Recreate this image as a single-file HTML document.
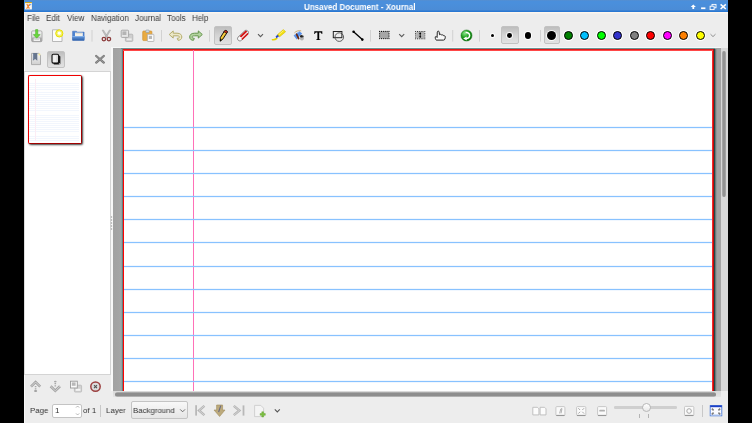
<!DOCTYPE html>
<html><head><meta charset="utf-8">
<style>
*{margin:0;padding:0;box-sizing:border-box}
body{-webkit-font-smoothing:antialiased}
html,body{width:752px;height:423px;overflow:hidden;background:#000;font-family:"Liberation Sans",sans-serif;font-size:8px;color:#2e3436;position:relative}
.a{position:absolute}
.tx{position:absolute;line-height:10px;white-space:nowrap;font-size:8.5px;transform:scaleX(0.94);transform-origin:0 0;will-change:transform}
#win{left:24px;top:0;width:704px;height:423px;background:#ededed}
#title{left:24px;top:0;width:704px;height:12px;background:linear-gradient(#5a8ecb 0,#4a8fdc 1px,#4a8fdc 3px,#4b8cd6 10px,#2a78d2 11px,#2a78d2 12px)}
.m{top:13px;color:#3a3a3a}
.pressed{background:linear-gradient(#bdbdbd,#d4d4d4 50%,#e2e2e2);border:1px solid #c2c2c2;border-radius:2px}
#canvas{left:113px;top:48px;width:608px;height:343px;background:linear-gradient(90deg,#a2a2a2 0,#a4a4a4 5px,#a6a6a6 7px,#98aaaa 8px,#8aa0a0 9px,#6a7c7c 9px,#6a7c7c 10px,#a4a4a4 10px);overflow:hidden}
#page{left:123px;top:49px;width:590px;height:342px;background:#fff;border-left:1px solid #f00;border-top:2px solid #e01818;border-right:1px solid #f42a2a;overflow:hidden}
.rl{left:124px;width:588px;height:1px;background:#88c2ff;box-shadow:0 -1px 0 rgba(136,194,255,0.13),0 1px 0 rgba(136,194,255,0.13)}
.s{top:405.5px;color:#333;font-size:8px!important;transform:scaleX(0.98)!important}
.cc{border-radius:50%;border:1.3px solid #000;box-shadow:0 0 0 1px rgba(255,255,255,0.9)}
.dot{border-radius:50%;background:#000;box-shadow:0 0 0 1px rgba(255,255,255,0.85)}
</style></head><body>
<div id="win" class="a"></div>
<div class="a" style="left:24px;top:12px;width:1px;height:411px;background:#f8f8f8"></div>
<div id="title" class="a"></div>
<div class="tx" style="left:304px;top:2px;font-weight:bold;color:#fff">Unsaved Document - Xournal</div>
<div class="a" style="left:24px;top:12px;width:704px;height:1px;background:#fdf6ee"></div>
<div class="a" style="left:24px;top:13px;width:704px;height:1px;background:#f3f1ee"></div>
<div class="tx m" style="left:27px">File</div>
<div class="tx m" style="left:46px">Edit</div>
<div class="tx m" style="left:67px">View</div>
<div class="tx m" style="left:91px">Navigation</div>
<div class="tx m" style="left:135px">Journal</div>
<div class="tx m" style="left:167px">Tools</div>
<div class="tx m" style="left:192px">Help</div>

<!-- toolbar pressed buttons & dots -->
<div class="a pressed" style="left:214px;top:26px;width:18px;height:19px"></div>
<div class="a dot" style="left:490.5px;top:34px;width:3px;height:3px"></div>
<div class="a pressed" style="left:501px;top:26px;width:18px;height:18px"></div>
<div class="a dot" style="left:507.3px;top:33.2px;width:4.8px;height:4.8px"></div>
<div class="a dot" style="left:524.7px;top:32.3px;width:6.6px;height:6.6px"></div>
<div class="a pressed" style="left:544px;top:26px;width:16px;height:18px"></div>
<div class="a dot" style="left:547.4px;top:31.1px;width:9px;height:9px"></div>

<div class="a cc" style="left:564.0px;top:31px;width:9.2px;height:9.2px;background:#008000"></div>
<div class="a cc" style="left:580.2px;top:31px;width:9.2px;height:9.2px;background:#00c0ff"></div>
<div class="a cc" style="left:596.7px;top:31px;width:9.2px;height:9.2px;background:#00ff00"></div>
<div class="a cc" style="left:613.2px;top:31px;width:9.2px;height:9.2px;background:#3333cc"></div>
<div class="a cc" style="left:629.7px;top:31px;width:9.2px;height:9.2px;background:#808080"></div>
<div class="a cc" style="left:646.2px;top:31px;width:9.2px;height:9.2px;background:#ff0000"></div>
<div class="a cc" style="left:662.7px;top:31px;width:9.2px;height:9.2px;background:#ff00ff"></div>
<div class="a cc" style="left:679.2px;top:31px;width:9.2px;height:9.2px;background:#ff8000"></div>
<div class="a cc" style="left:695.7px;top:31px;width:9.2px;height:9.2px;background:#ffff00"></div>

<!-- sidebar -->
<div class="a pressed" style="left:47px;top:51px;width:18px;height:17px"></div>
<div class="a" style="left:24px;top:71px;width:87px;height:304px;background:#fff;border:1px solid #d4d4d4;border-left-color:#dcdcdc"></div>
<div class="a" style="left:28px;top:75px;width:54px;height:68.5px;background:#fff;border:1.5px solid #f00000;border-right-color:#a00000;border-bottom-color:#a00000;border-radius:2px;box-shadow:1px 1px 2px rgba(0,0,0,0.75)"><div class="a" style="left:0;top:6px;width:50px;height:59px;background:repeating-linear-gradient(#fff 0,#fff 1.1px,#f2f6fd 1.1px,#f2f6fd 2.1px)"></div></div>
<div class="a" style="left:35px;top:79px;width:1px;height:62px;background:#fcecf4"></div>

<!-- canvas -->
<div id="canvas" class="a"></div>
<div id="page" class="a"></div>
<div class="a" style="left:121px;top:48px;width:594px;height:1px;background:#6e9292"></div>
<div class="a" style="left:123px;top:50px;width:591px;height:1px;background:#ff4848"></div>
<div class="a" style="left:112px;top:47px;width:609px;height:1px;background:#f6f8f8"></div>
<div class="a" style="left:111px;top:47px;width:2px;height:344px;background:#f8f8f8"></div>
<div class="a" style="left:713px;top:49px;width:1px;height:342px;background:#c00808"></div>
<div class="a" style="left:714px;top:49px;width:1px;height:342px;background:#204a4a"></div>
<div class="a" style="left:715px;top:49px;width:1px;height:342px;background:#6c7878"></div>
<div class="a" style="left:716px;top:49px;width:1px;height:342px;background:#949898"></div>
<div class="a" style="left:193px;top:50px;width:1px;height:341px;background:#ff70b8"></div>
<div class="a rl" style="top:126.9px"></div><div class="a rl" style="top:150.0px"></div><div class="a rl" style="top:173.1px"></div><div class="a rl" style="top:196.2px"></div><div class="a rl" style="top:219.3px"></div><div class="a rl" style="top:242.4px"></div><div class="a rl" style="top:265.5px"></div><div class="a rl" style="top:288.6px"></div><div class="a rl" style="top:311.7px"></div><div class="a rl" style="top:334.8px"></div><div class="a rl" style="top:357.9px"></div><div class="a rl" style="top:381.0px"></div>
<div class="a" style="left:721px;top:48px;width:7px;height:343px;background:#d8d8d8"></div>
<div class="a" style="left:722.3px;top:50.6px;width:4.2px;height:146px;background:linear-gradient(90deg,#b0b0b0,#939393 30%,#939393 70%,#b0b0b0);border-radius:2.1px"></div>
<div class="a" style="left:113px;top:391px;width:608px;height:6px;background:linear-gradient(#dadada 0,#dadada 1px,#e4e4e4 6px)"></div>
<div class="a" style="left:115px;top:392px;width:601px;height:5px;background:linear-gradient(#bdbdbd 0,#8e8e8e 1.2px,#8e8e8e 3.6px,#c4c4c4 5px);border-radius:2.5px"></div>

<!-- status -->
<div class="tx s" style="left:29.5px">Page</div>
<div class="a" style="left:52px;top:404px;width:29.5px;height:13.5px;background:#fff;border:1px solid #c4c4c4;border-radius:2px"></div>
<div class="tx s" style="left:54.5px">1</div>
<div class="tx s" style="left:82.5px">of 1</div>
<div class="a" style="left:99.5px;top:405px;width:1px;height:12px;background:#c8c8c8"></div>
<div class="tx s" style="left:106px">Layer</div>
<div class="a" style="left:130.8px;top:401.3px;width:57.7px;height:18.2px;background:linear-gradient(#f8f8f8,#e6e6e6);border:1px solid #c4c4c4;border-radius:2px"></div>
<div class="tx s" style="left:133px">Background</div>
<div class="a" style="left:613.6px;top:406.2px;width:63.7px;height:2.6px;background:#cfcfcf;border-radius:1.3px"></div>
<div class="a" style="left:642.2px;top:403px;width:9px;height:9px;background:linear-gradient(#fff,#e8e8e8);border:1px solid #b8b8b8;border-radius:50%"></div>
<div class="a" style="left:639px;top:413.5px;width:1px;height:4.5px;background:#b4b4b4"></div>
<div class="a" style="left:647.5px;top:413.5px;width:1px;height:4.5px;background:#b4b4b4"></div>
<div class="a" style="left:702px;top:405px;width:1px;height:12px;background:#c8c8c8"></div>
<svg class="a" style="left:0;top:0" width="752" height="423" viewBox="0 0 752 423">
<defs>
<linearGradient id="gbox" x1="0" y1="0" x2="0" y2="1"><stop offset="0" stop-color="#f4f4f4"/><stop offset="0.6" stop-color="#d8d8d8"/><stop offset="1" stop-color="#9a9a9a"/></linearGradient>
<linearGradient id="gbm" x1="0" y1="0" x2="0" y2="1"><stop offset="0" stop-color="#f4f4f4"/><stop offset="1" stop-color="#d0d0d0"/></linearGradient>
<linearGradient id="gfold" x1="0" y1="0" x2="0" y2="1"><stop offset="0" stop-color="#6a9ee0"/><stop offset="1" stop-color="#2c5ea8"/></linearGradient>
<radialGradient id="gref" cx="0.35" cy="0.3" r="0.75"><stop offset="0" stop-color="#8ae88a"/><stop offset="0.5" stop-color="#20a020"/><stop offset="1" stop-color="#067006"/></radialGradient>
</defs>
<!-- app icon -->
<rect x="25" y="2.2" width="6.9" height="7.2" fill="#fbf6ee"/>
<rect x="25" y="2" width="6.9" height="1.1" fill="#c8a420"/>
<path d="M26.8 4 L29.4 8.6 M29.6 4 L26.6 8.8" stroke="#f4802a" stroke-width="1.15"/>
<path d="M29.2 6 L31.2 4" stroke="#4a8ae0" stroke-width="0.9"/>
<!-- title buttons -->
<path d="M693.3 4.6 L695.9 7 H694.2 V8.9 H692.4 V7 H690.7 Z" fill="#fff"/>
<rect x="701.1" y="7.4" width="4.3" height="1.7" fill="#fff"/>
<rect x="712" y="4.4" width="4" height="3.4" fill="none" stroke="#fff" stroke-width="0.9"/>
<rect x="710.1" y="6.2" width="4" height="3.4" fill="#4a8cd8" stroke="#fff" stroke-width="0.9"/>
<path d="M720.6 4.4 L725.8 9 M725.8 4.4 L720.6 9" stroke="#fff" stroke-width="1.5"/>
<!-- save -->
<rect x="31.6" y="30.9" width="10.4" height="10.8" rx="1.2" fill="url(#gbox)" stroke="#a0a0a0" stroke-width="0.8"/>
<rect x="31.9" y="37.6" width="9.8" height="3.8" rx="0.8" fill="#a8a8a8"/>
<rect x="33.6" y="38.4" width="6.4" height="2.6" fill="#f2f2f2"/>
<rect x="34.4" y="39.1" width="4.8" height="0.5" fill="#b8b8b8"/>
<path d="M35.6 29.6h2.2v5h2.3l-3.4 3.6-3.4-3.6h2.3z" fill="#6ad83c" stroke="#40a820" stroke-width="0.5"/>
<!-- new -->
<path d="M52.5 29.8h7l2.5 2.5v9.2h-9.5z" fill="#fbfbfb" stroke="#a8a8a8" stroke-width="0.8"/>
<circle cx="59.3" cy="33.4" r="3.6" fill="#f4f06a" stroke="#e8e000" stroke-width="1"/>
<circle cx="59.3" cy="33.2" r="1.6" fill="#fff"/>
<!-- open folder -->
<path d="M72.6 31.2h3.8l0.9 0.9h6.8v8.2h-11.5z" fill="#4f84d0" stroke="#3a6ab8" stroke-width="0.5"/>
<rect x="75" y="32.6" width="7.8" height="4" fill="#f4f2ea"/>
<rect x="75.6" y="33.4" width="6.6" height="0.6" fill="#d8d4c8"/>
<path d="M72 36.2h12.8l-0.6 4.2h-11.6z" fill="url(#gfold)"/>
<path d="M72.2 36.5h12.4" stroke="#8ab4ec" stroke-width="0.7"/>
<!-- separators -->
<rect x="91.5" y="30" width="1" height="11.6" fill="#d2d2d2"/>
<rect x="161" y="30" width="1" height="11.6" fill="#d2d2d2"/>
<rect x="209" y="30" width="1" height="11.6" fill="#d2d2d2"/>
<rect x="370" y="30" width="1" height="11.6" fill="#d2d2d2"/>
<rect x="452.2" y="30" width="1" height="11.6" fill="#d2d2d2"/>
<rect x="479" y="30" width="1" height="11.6" fill="#d2d2d2"/>
<rect x="540" y="30" width="1" height="11.6" fill="#d2d2d2"/>
<!-- scissors -->
<path d="M102.2 30.2 L103.4 30 L107.4 36.4 L106.4 37.4 Z" fill="#c4c4c4" stroke="#9a9a9a" stroke-width="0.5"/>
<path d="M110.6 30.2 L109.4 30 L105.4 36.4 L106.4 37.4 Z" fill="#c4c4c4" stroke="#9a9a9a" stroke-width="0.5"/>
<circle cx="103.9" cy="39.1" r="1.75" fill="none" stroke="#8c3c3c" stroke-width="1.3"/>
<circle cx="108.9" cy="39.1" r="1.75" fill="none" stroke="#8c3c3c" stroke-width="1.3"/>
<!-- copy -->
<rect x="125.4" y="34.2" width="7.4" height="7.2" rx="0.9" fill="#cfcfcf" stroke="#b0b0b0" stroke-width="0.8"/>
<rect x="126.8" y="38.4" width="4.8" height="1.8" fill="#ededed"/>
<rect x="121.2" y="30.2" width="7.4" height="7.2" rx="0.9" fill="#e6e6e6" stroke="#a2a2a2" stroke-width="0.9"/>
<rect x="122.4" y="31.4" width="4" height="3.6" fill="#b4b4b4"/>
<!-- paste -->
<rect x="142.7" y="31" width="9.2" height="9.6" rx="0.9" fill="#e9ab42" stroke="#c98a2a" stroke-width="0.6"/>
<rect x="145.8" y="30" width="3.4" height="2.6" rx="0.9" fill="#d4dce4" stroke="#8a98a8" stroke-width="0.6"/>
<rect x="147.4" y="34.3" width="6.5" height="7.2" rx="0.6" fill="#fafafa" stroke="#a8a8a8" stroke-width="0.7"/>
<rect x="148.8" y="35.8" width="3.2" height="3.2" fill="#b8b8b8"/>
<!-- undo -->
<path d="M169.2 34.5 L173.2 30.9 V33.2 H177 C180.5 33.2 181.8 35 181.8 37 C181.8 39.2 180.2 40.3 178 40.3 L177.2 38.3 C178.6 38.3 179.4 37.8 179.4 37 C179.4 36.2 178.6 35.8 177 35.8 H173.2 V38.1 Z" fill="#ece8c8" stroke="#b4ac6c" stroke-width="1" stroke-linejoin="round"/>
<!-- redo -->
<path d="M202.3 34.5 L198.3 30.9 V33.2 H194.5 C191 33.2 189.7 35 189.7 37 C189.7 39.2 191.3 40.3 193.5 40.3 L194.3 38.3 C192.9 38.3 192.1 37.8 192.1 37 C192.1 36.2 192.9 35.8 194.5 35.8 H198.3 V38.1 Z" fill="#b4d4a0" stroke="#64944c" stroke-width="1" stroke-linejoin="round"/>
<!-- pencil -->
<path d="M220.2 41.2 L220.3 37.6 L224.5 30.9 C225.2 29.8 227.8 30.9 227.3 32.2 L223 38.9 Z" fill="#f0c028" stroke="#0a0a0a" stroke-width="0.95" stroke-linejoin="round"/>
<path d="M221.6 37.9 L225.9 31.1" stroke="#f8e070" stroke-width="0.6"/>
<path d="M224.5 30.9 C225.2 29.8 227.8 30.9 227.3 32.2 L226.6 33.2 L223.9 31.9 Z" fill="#d42a1a" stroke="#0a0a0a" stroke-width="0.6"/>
<path d="M220.2 41.2 L220.3 39 L221.9 39.8 Z" fill="#000"/>
<!-- eraser -->
<path d="M238 37.2 L244.8 30.8 C245.6 30 247 30.2 247.8 31 C248.6 31.8 248.8 33.2 248 34 L241.2 40.4 C240.4 41.2 239 41 238.2 40.2 C237.4 39.4 237.2 38 238 37.2Z" fill="#f8f8f8" stroke="#6a6a6a" stroke-width="0.8"/>
<path d="M239.6 36.2 L245.6 30.6 L247.4 31.6 L241.2 37.6 Z M241.4 38.8 L247.6 32.8 L248.4 34.2 L242.4 40 Z" fill="#d41a1a"/>
<!-- chevrons -->
<path d="M258 34.2 L260.5 36.6 L263 34.2" fill="none" stroke="#5c5c5c" stroke-width="1.15"/>
<path d="M399.2 34.2 L401.7 36.6 L404.2 34.2" fill="none" stroke="#5c5c5c" stroke-width="1.15"/>
<path d="M710.5 34.2 L713 36.6 L715.5 34.2" fill="none" stroke="#909090" stroke-width="1"/>
<!-- highlighter -->
<path d="M272.4 39.7 C274 39.9 275.6 39.5 276.8 38.4" fill="none" stroke="#e8d400" stroke-width="1.5" stroke-linecap="round"/>
<path d="M276.4 38.2 L275.6 36.4 L278 34.2 L279.8 35.8 Z" fill="#2848c8"/>
<path d="M277.6 34.6 L283.4 29.6 L285.6 31.8 L279.6 36.8 Z" fill="#f4e010" stroke="#d0bc00" stroke-width="0.6"/>
<path d="M279 34.6 L283.6 30.6" stroke="#fff6a0" stroke-width="0.7"/>
<!-- image tool -->
<path d="M294.4 32.9 C296 30.9 299 30.3 301.2 30.9" fill="none" stroke="#c8a466" stroke-width="0.9"/>
<path d="M293.6 35.4 L299.4 31.2 L302.2 33.6 L296.6 39.6 Z" fill="#5a92ea"/>
<path d="M294.8 35.2 L299.2 32" stroke="#8ab8ff" stroke-width="0.7"/>
<path d="M296.6 34.2 L298.6 38.6" stroke="#6a2a10" stroke-width="1.7" stroke-linecap="round"/>
<ellipse cx="301.9" cy="37.6" rx="2.1" ry="2.9" fill="#b4b4b4"/>
<ellipse cx="301.7" cy="36.3" rx="1.6" ry="1.3" fill="#141414"/>
<circle cx="302.2" cy="35.8" r="0.5" fill="#d0d0d0"/>
<!-- T -->
<path d="M314.3 31.3 H322.3 V34 H321.6 C321.4 32.7 321 32.4 319.5 32.4 H319.2 V38.8 C319.2 39.4 319.6 39.5 320.5 39.5 V40 H316.1 V39.5 C317 39.5 317.4 39.4 317.4 38.8 V32.4 H317.1 C315.6 32.4 315.2 32.7 315 34 H314.3 Z" fill="#000"/>
<!-- shape -->
<rect x="333.3" y="31.5" width="8.6" height="6.2" fill="none" stroke="#222" stroke-width="1"/>
<circle cx="339.3" cy="37.1" r="4.3" fill="none" stroke="#444" stroke-width="0.85"/>
<!-- line -->
<path d="M353.6 31.8 L362.3 39.6" stroke="#000" stroke-width="1.3"/>
<circle cx="353.6" cy="31.8" r="1.3" fill="#000"/>
<circle cx="362.3" cy="39.6" r="1.3" fill="#000"/>
<!-- rect select -->
<rect x="379.6" y="31.4" width="9.4" height="7.2" fill="#a6a6a6"/>
<circle cx="379.60" cy="31.4" r="0.55" fill="#000"/><circle cx="379.60" cy="38.6" r="0.55" fill="#000"/>
<circle cx="381.48" cy="31.4" r="0.55" fill="#000"/><circle cx="381.48" cy="38.6" r="0.55" fill="#000"/>
<circle cx="383.36" cy="31.4" r="0.55" fill="#000"/><circle cx="383.36" cy="38.6" r="0.55" fill="#000"/>
<circle cx="385.24" cy="31.4" r="0.55" fill="#000"/><circle cx="385.24" cy="38.6" r="0.55" fill="#000"/>
<circle cx="387.12" cy="31.4" r="0.55" fill="#000"/><circle cx="387.12" cy="38.6" r="0.55" fill="#000"/>
<circle cx="389.00" cy="31.4" r="0.55" fill="#000"/><circle cx="389.00" cy="38.6" r="0.55" fill="#000"/>
<circle cx="379.6" cy="33.20" r="0.55" fill="#000"/><circle cx="389.0" cy="33.20" r="0.55" fill="#000"/>
<circle cx="379.6" cy="35.00" r="0.55" fill="#000"/><circle cx="389.0" cy="35.00" r="0.55" fill="#000"/>
<circle cx="379.6" cy="36.80" r="0.55" fill="#000"/><circle cx="389.0" cy="36.80" r="0.55" fill="#000"/>
<rect x="416.20000000000005" y="31.9" width="8.0" height="6.4" fill="#b2b2b2"/>
<circle cx="415.60" cy="31.4" r="0.5" fill="#000"/><circle cx="415.60" cy="38.8" r="0.5" fill="#000"/>
<circle cx="417.44" cy="31.4" r="0.5" fill="#000"/><circle cx="417.44" cy="38.8" r="0.5" fill="#000"/>
<circle cx="419.28" cy="31.4" r="0.5" fill="#000"/><circle cx="419.28" cy="38.8" r="0.5" fill="#000"/>
<circle cx="421.12" cy="31.4" r="0.5" fill="#000"/><circle cx="421.12" cy="38.8" r="0.5" fill="#000"/>
<circle cx="422.96" cy="31.4" r="0.5" fill="#000"/><circle cx="422.96" cy="38.8" r="0.5" fill="#000"/>
<circle cx="424.80" cy="31.4" r="0.5" fill="#000"/><circle cx="424.80" cy="38.8" r="0.5" fill="#000"/>
<circle cx="415.6" cy="33.25" r="0.5" fill="#000"/><circle cx="424.8" cy="33.25" r="0.5" fill="#000"/><circle cx="415.6" cy="35.10" r="0.5" fill="#000"/><circle cx="424.8" cy="35.10" r="0.5" fill="#000"/><circle cx="415.6" cy="36.95" r="0.5" fill="#000"/><circle cx="424.8" cy="36.95" r="0.5" fill="#000"/><path d="M420.2 32.8 V37.4" stroke="#000" stroke-width="0.9"/><path d="M419.1 34 L420.2 32.2 L421.3 34 Z M419.1 36.2 L420.2 38 L421.3 36.2 Z" fill="#000"/>
<!-- hand -->
<path d="M436.2 40.1 C435.5 39.2 435.1 38.1 435.3 36.9 L436.3 36.5 L437.1 37.5 L437.3 32.1 C437.4 30.8 439.1 30.8 439.2 32.1 L439.5 34.7 C440.1 34 441.4 34.2 441.6 35.1 C442.2 34.6 443.5 34.9 443.6 35.7 C444.5 35.5 445.5 36.1 445.3 37.3 L444.9 39 C444.7 39.8 444.1 40.1 443.5 40.1 Z" fill="#f8f8f8" stroke="#1a1a1a" stroke-width="0.95" stroke-linejoin="round"/>
<!-- refresh -->
<circle cx="466.5" cy="35.5" r="5.5" fill="url(#gref)" stroke="#0a6a0a" stroke-width="0.5"/>
<path d="M465.6 32.6 C467.8 32.2 469.6 33.6 469.6 35.6 C469.6 37.6 467.8 38.8 466 38.5" fill="none" stroke="#fff" stroke-width="1.5"/>
<path d="M463.2 38.4 L466.6 36.4 L466.8 40.4 Z" fill="#fff"/>
<!-- grip -->
<circle cx="111.5" cy="217" r="0.75" fill="#a0a0a0"/>
<circle cx="111.5" cy="220" r="0.75" fill="#a0a0a0"/>
<circle cx="111.5" cy="223" r="0.75" fill="#a0a0a0"/>
<circle cx="111.5" cy="226" r="0.75" fill="#a0a0a0"/>
<circle cx="111.5" cy="229" r="0.75" fill="#a0a0a0"/>
<!-- sidebar bookmark -->
<path d="M31.5 53.4h7.2l1.8 1.8v9.4h-9z" fill="url(#gbm)" stroke="#a0a0a0" stroke-width="0.8"/>
<path d="M32.9 53h4.4v7.8l-2.2-1.7-2.2 1.7z" fill="#66768e"/>
<path d="M33.6 53.4v6" stroke="#8a9ab0" stroke-width="0.6"/>
<circle cx="39.4" cy="54.4" r="1" fill="#f0e890"/>
<!-- sidebar pages -->
<path d="M53.6 55.8 h5.6 a1.2 1.2 0 0 1 1.2 1.2 v6.6 a1 1 0 0 1 -1 1 h-5.6 z" fill="#1a1a1a"/>
<rect x="52" y="54.3" width="6.6" height="8.8" rx="1.3" fill="#dcdcdc" stroke="#111" stroke-width="1.1"/>
<rect x="53.2" y="55.4" width="3" height="6.6" fill="#efefef"/>
<circle cx="59.4" cy="63.8" r="0.6" fill="#fff"/>
<!-- sidebar close -->
<path d="M96.2 56 L103.8 62.6 M103.8 56 L96.2 62.6" stroke="#777" stroke-width="2.3" stroke-linecap="round"/>
<path d="M96.2 56 L103.8 62.6 M103.8 56 L96.2 62.6" stroke="#9a9a9a" stroke-width="0.9" stroke-linecap="round"/>
<!-- sidebar bottom: up -->
<path d="M31 386.6 L35.6 382 L40.2 386.6" fill="none" stroke="#a4a4a4" stroke-width="2.6"/>
<path d="M31 386.6 L35.6 382 L40.2 386.6" fill="none" stroke="#dedede" stroke-width="0.8"/>
<path d="M35.6 386 V389.6" stroke="#a8a8a8" stroke-width="1.6" stroke-dasharray="1.2 1"/>
<ellipse cx="35.6" cy="391" rx="1.6" ry="0.9" fill="#a0a0a0"/>
<!-- down -->
<path d="M50.6 386.2 L55.3 390.8 L60 386.2" fill="none" stroke="#a4a4a4" stroke-width="2.6"/>
<path d="M50.6 386.2 L55.3 390.8 L60 386.2" fill="none" stroke="#dedede" stroke-width="0.8"/>
<path d="M55.3 383 V387" stroke="#a8a8a8" stroke-width="1.6" stroke-dasharray="1.2 1"/>
<ellipse cx="55.3" cy="381.6" rx="1.3" ry="0.9" fill="#a8a8a8"/>
<!-- copy page -->
<rect x="74.4" y="385.2" width="7.2" height="6.8" rx="0.8" fill="#d2d2d2" stroke="#b8b8b8" stroke-width="0.8"/>
<rect x="75.8" y="388.8" width="4.6" height="2" fill="#f6f6f6"/>
<rect x="70.5" y="381.2" width="6.8" height="6.8" fill="#fafafa" stroke="#9a9a9a" stroke-width="0.9"/>
<rect x="71.8" y="382.4" width="3.8" height="3.4" fill="#b8b8b8"/>
<!-- delete -->
<circle cx="95.5" cy="386.6" r="4.7" fill="#dcdcdc" stroke="#9c4040" stroke-width="1.5"/>
<path d="M94 385.1 L97 388.1 M97 385.1 L94 388.1" stroke="#505050" stroke-width="1.1"/>
<!-- spin arrows -->
<path d="M76 407.6 L77.6 406 L79.2 407.6" fill="none" stroke="#9a9a9a" stroke-width="0.7"/>
<path d="M76 413.4 L77.6 415 L79.2 413.4" fill="none" stroke="#9a9a9a" stroke-width="0.7"/>
<!-- combo chevron -->
<path d="M180.2 409.4 L182.6 411.8 L185 409.4" fill="none" stroke="#606060" stroke-width="0.9"/>
<!-- first page -->
<rect x="195.2" y="405.2" width="1.8" height="10.4" fill="#b8b8b8"/>
<path d="M204.4 405.8 L199 410.5 L204.4 415.2" fill="none" stroke="#b4b4b4" stroke-width="2.4"/>
<path d="M204.4 405.8 L199 410.5 L204.4 415.2" fill="none" stroke="#e8e8e8" stroke-width="0.6"/>
<!-- goto -->
<path d="M216.6 405 H222.6 V410 H225 L219.6 416.5 L214 410 H216.6 Z" fill="#bcaa7c" stroke="#a08c5c" stroke-width="0.6"/>
<path d="M218.6 412 L220.8 405.6" stroke="#6a6a80" stroke-width="1.1"/>
<!-- last page -->
<rect x="242.6" y="405.4" width="1.8" height="10.2" fill="#b8b8b8"/>
<path d="M233.8 405.8 L239.4 410.5 L233.8 415.2" fill="none" stroke="#b4b4b4" stroke-width="2.4"/>
<path d="M233.8 405.8 L239.4 410.5 L233.8 415.2" fill="none" stroke="#e8e8e8" stroke-width="0.6"/>
<!-- new page -->
<path d="M254.6 405.4h6.2l2.8 2.8v8.4h-9z" fill="#f4f4f4" stroke="#c8c8c8" stroke-width="0.8"/>
<path d="M261.8 411.8 h1.8 v1.7 h1.7 v1.8 h-1.7 v1.7 h-1.8 v-1.7 h-1.7 v-1.8 h1.7 z" fill="#7cc040" stroke="#5a9a28" stroke-width="0.4"/>
<path d="M274.8 409.4 L277.3 411.9 L279.8 409.4" fill="none" stroke="#555" stroke-width="1.1"/>
<!-- zoom icons -->
<path d="M532.8 407.3h4.6l1.5 1.5v6.1h-6.1z" fill="#fcfcfc" stroke="#b4b4b4" stroke-width="0.8"/>
<path d="M540.1 407.3h4.4l1.5 1.5v6.1h-5.9z" fill="#fcfcfc" stroke="#b4b4b4" stroke-width="0.8"/>
<rect x="555.9" y="406.6" width="9" height="9" rx="1" fill="#fafafa" stroke="#bcbcbc" stroke-width="0.8"/>
<path d="M556.3 415.4h8.2" stroke="#8a8a8a" stroke-width="0.9"/>
<path d="M559.6 413.4 L560.8 409 L562 408.6 L561 413.4" stroke="#a0a0a0" stroke-width="0.8" fill="none"/>
<rect x="576.6" y="406.6" width="9.2" height="9" rx="1" fill="#fafafa" stroke="#bcbcbc" stroke-width="0.8"/>
<path d="M577 415.4h8.4" stroke="#8a8a8a" stroke-width="0.9"/>
<path d="M578.3 408.2 l1.8 1.8 M584.1 408.2 l-1.8 1.8 M578.3 413.6 l1.8 -1.8 M584.1 413.6 l-1.8 -1.8" stroke="#a8a8a8" stroke-width="1"/>
<rect x="597.6" y="406.6" width="9" height="9" rx="1" fill="#fafafa" stroke="#bcbcbc" stroke-width="0.8"/>
<path d="M598 415.4h8.2" stroke="#8a8a8a" stroke-width="0.9"/>
<rect x="599.2" y="409.8" width="5.8" height="1.8" rx="0.9" fill="#b0b0b0"/>
<rect x="684.5" y="406.4" width="9.3" height="9.2" rx="1" fill="#fafafa" stroke="#bcbcbc" stroke-width="0.8"/>
<path d="M684.9 415.4h8.5" stroke="#8a8a8a" stroke-width="0.9"/>
<circle cx="689.1" cy="411" r="2.3" fill="none" stroke="#a8a8a8" stroke-width="1"/>
<!-- fullscreen -->
<rect x="710.2" y="405.6" width="11.6" height="10.2" fill="#fbfbff" stroke="#4a7ad8" stroke-width="0.9"/>
<rect x="710.2" y="405.4" width="11.6" height="1.8" fill="#1c3ec4"/>
<rect x="710.6" y="414.2" width="10.8" height="1.2" fill="#c8d8f4"/>
<path d="M711.8 408.6 l1.8 1.8 M720.2 408.6 l-1.8 1.8 M711.8 414.4 l1.8 -1.8 M720.2 414.4 l-1.8 -1.8" stroke="#7a7a7a" stroke-width="1.5"/>
</svg>

</body></html>
